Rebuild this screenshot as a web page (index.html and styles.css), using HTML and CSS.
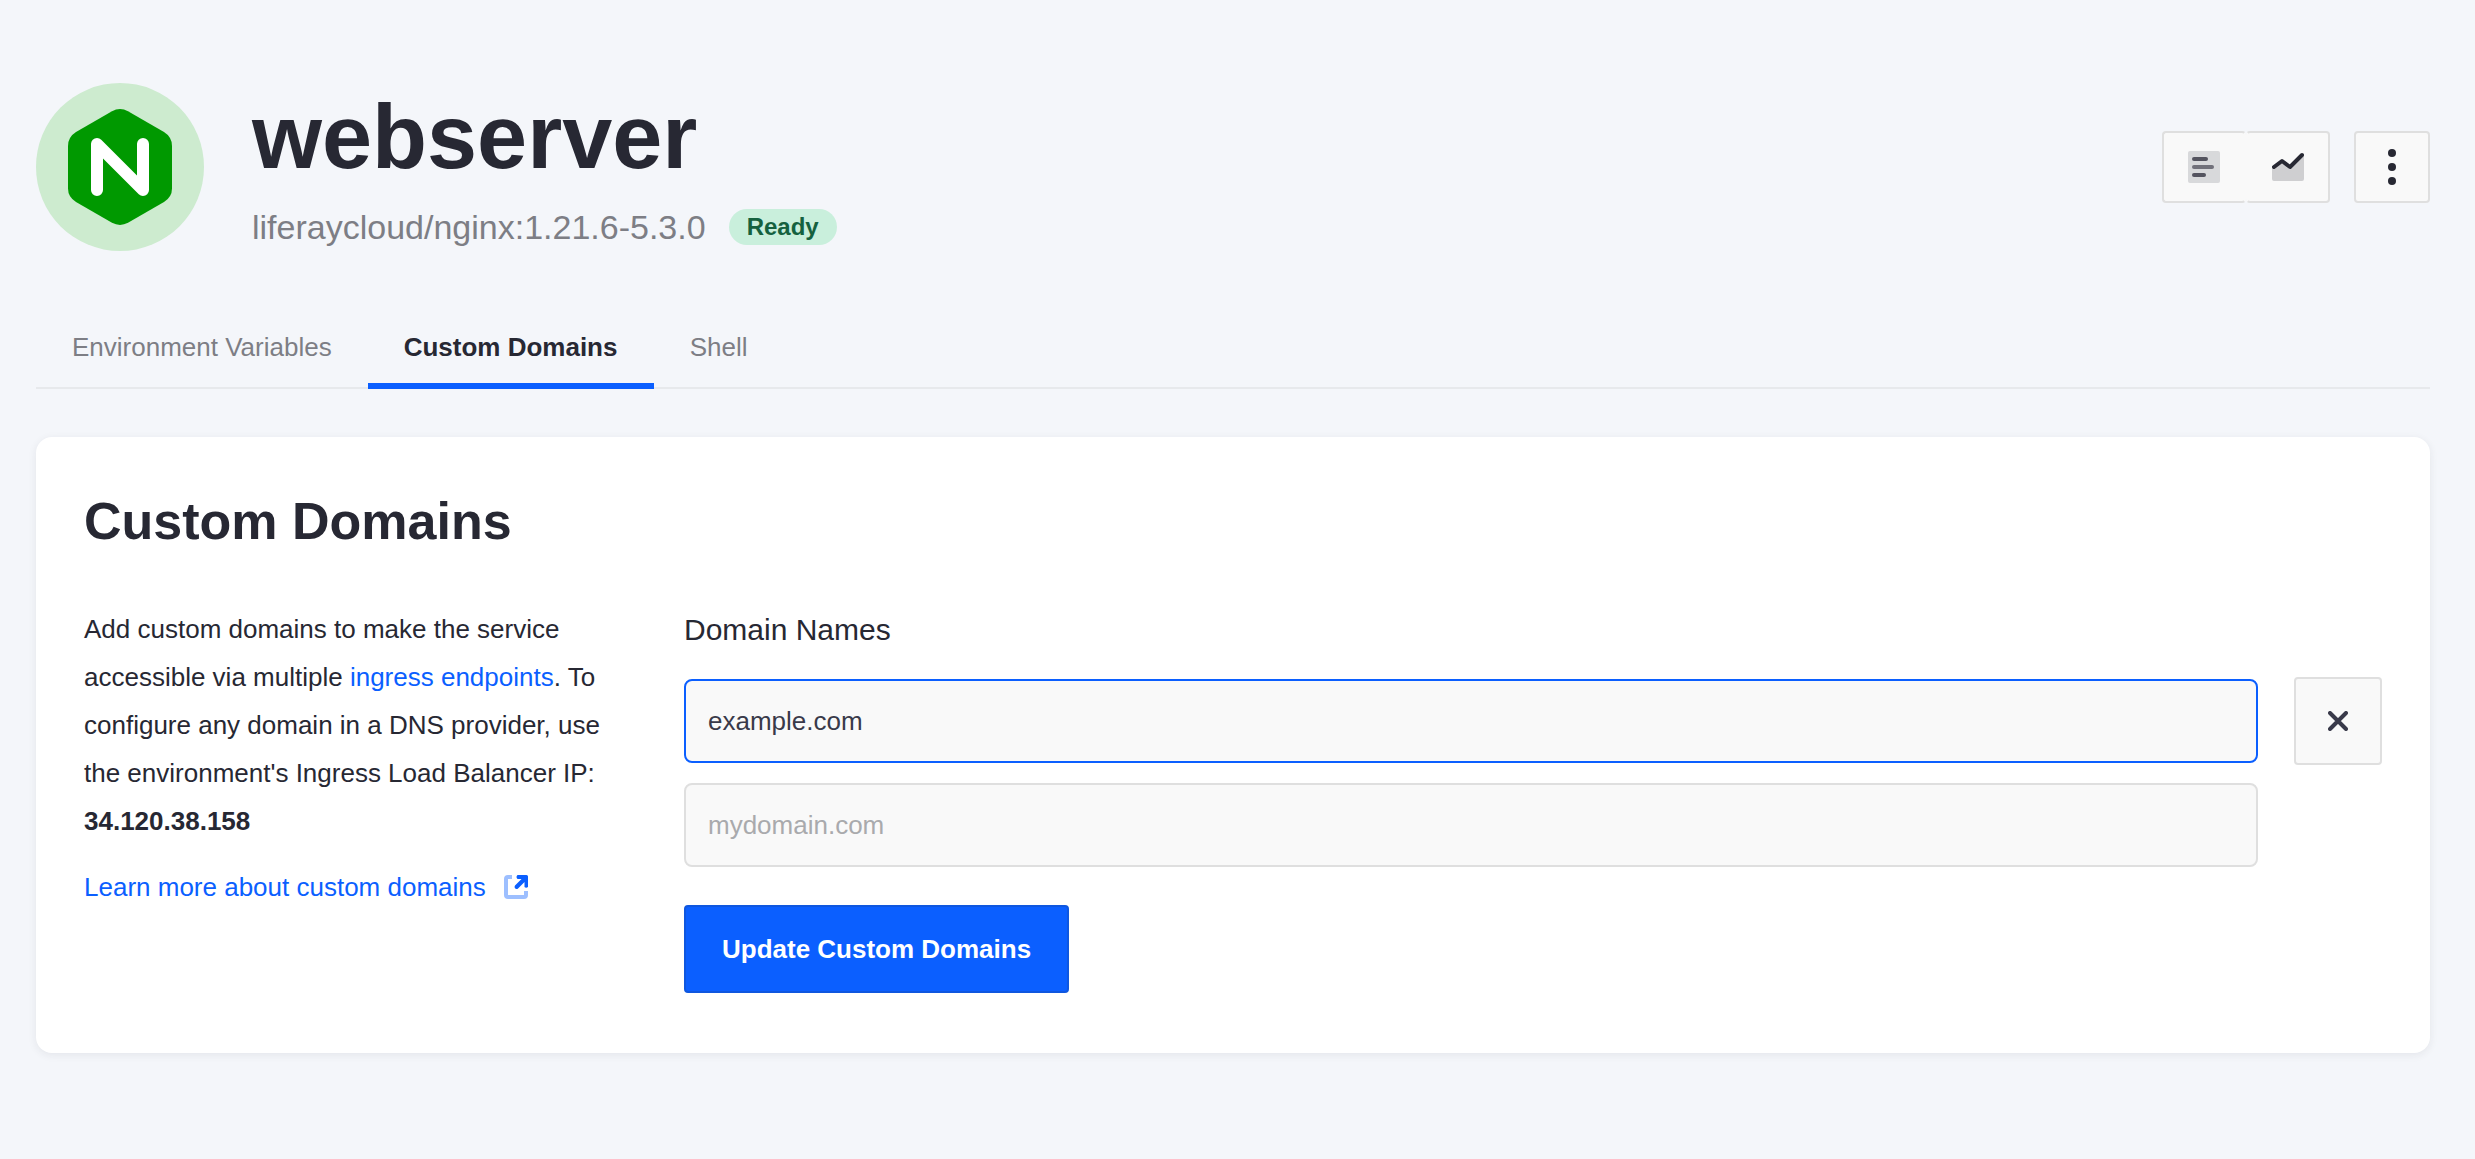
FILE: index.html
```html
<!DOCTYPE html>
<html lang="en">
<head>
<meta charset="utf-8">
<title>webserver</title>
<link rel="stylesheet" href="styles.css">
</head>
<body>
<main class="page">
  <header class="service">
    <svg class="service-logo" viewBox="0 0 168 168" aria-hidden="true">
      <circle cx="84" cy="84" r="84" fill="#cdebcf"/>
      <path d="M76 28.200Q84 24 92 28.200L128 49Q136 54 136 63V105.500Q136 114 128 119L92 139.800Q84 144 76 139.800L40 119Q32 114 32 105.500V63Q32 54 40 49Z" fill="#009900"/>
      <path d="M61 107V61L107 107V61" fill="none" stroke="#fff" stroke-width="12" stroke-linecap="round" stroke-linejoin="round"/>
    </svg>
    <div class="service-info">
      <h1 class="service-name">webserver</h1>
      <div class="service-meta">
        <span class="service-image">liferaycloud/nginx:1.21.6-5.3.0</span>
        <span class="badge">Ready</span>
      </div>
    </div>
    <div class="toolbar">
      <div class="button-group">
        <button class="tool" aria-label="Logs">
          <svg width="32" height="32" viewBox="0 0 32 32"><rect width="32" height="32" rx="2" fill="#d8d9db"/><g stroke-width="4" stroke-linecap="round"><path d="M6 8H18" stroke="#54545f"/><path d="M6 16H24" stroke="#71717a"/><path d="M6 24H16" stroke="#54545f"/></g></svg>
        </button>
        <button class="tool" aria-label="Metrics">
          <svg width="32" height="32" viewBox="0 0 32 32"><path d="M0 16L10 9L18 16L32 4V28Q32 30 30 30H2Q0 30 0 28Z" fill="#cfcfd1"/><path d="M2 16L10 10L18 16L30 4" fill="none" stroke="#272833" stroke-width="4" stroke-linecap="round" stroke-linejoin="round"/></svg>
        </button>
      </div>
      <button class="tool tool-menu" aria-label="More">
        <svg width="32" height="36" viewBox="0 0 32 36" fill="#272833"><circle cx="16" cy="4" r="4"/><circle cx="16" cy="18" r="4"/><circle cx="16" cy="32" r="4"/></svg>
      </button>
    </div>
  </header>

  <nav class="tabs">
    <a class="tab">Environment Variables</a>
    <a class="tab tab-active">Custom Domains</a>
    <a class="tab">Shell</a>
  </nav>

  <section class="card">
    <h2 class="card-title">Custom Domains</h2>
    <div class="card-body">
      <div class="help">
        <p class="help-text">Add custom domains to make the service accessible via multiple <a class="link">ingress endpoints</a>. To configure any domain in a DNS provider, use the environment's Ingress Load Balancer IP: <strong>34.120.38.158</strong></p>
        <a class="link learn-more">Learn more about custom domains
          <svg width="24" height="24" viewBox="0 0 24 24"><path d="M8 2H4Q2 2 2 4V20Q2 22 4 22H20Q22 22 22 20V16" fill="none" stroke="#9dbfff" stroke-width="4"/><path d="M13.500 0H22.500Q24 0 24 1.500V12Q22 13.500 20.500 12V7L13.800 13.700Q12 14.500 11 13.300Q10 12 11 10.600L17.500 4H13.500Q11.500 2 13.500 0Z" fill="#0b5fff"/></svg>
        </a>
      </div>
      <form class="form">
        <label class="label" for="domain">Domain Names</label>
        <div class="row">
          <input class="input input-focus" id="domain" type="text" value="example.com">
          <button class="remove" type="button" aria-label="Remove">
            <svg width="20" height="20" viewBox="0 0 20 20"><path d="M2 2L18 18M18 2L2 18" stroke="#393a4a" stroke-width="4" stroke-linecap="round"/></svg>
          </button>
        </div>
        <div class="row row-new">
          <input class="input" type="text" placeholder="mydomain.com" aria-label="New domain">
        </div>
        <button class="submit" type="button">Update Custom Domains</button>
      </form>
    </div>
  </section>
</main>
</body>
</html>
```

FILE: styles.css
```css
* {
  box-sizing: border-box;
}

body {
  margin: 0;
  background: #f4f6fa;
  color: #272833;
  font: 26px/48px "Liberation Sans", Arial, sans-serif;
}

button,
input {
  font: inherit;
  margin: 0;
}

.page {
  padding: 83px 45px 106px 36px;
}

.service {
  display: flex;
  align-items: center;
  height: 168px;
}

.service-logo {
  width: 168px;
  height: 168px;
}

.service-info {
  flex: 1;
  margin-left: 48px;
}

.service-name {
  margin: 0 0 12px;
  font-size: 90px;
  line-height: 108px;
}

.service-meta {
  display: flex;
  align-items: center;
  gap: 23px;
}

.service-image {
  color: #7d7e85;
  font-size: 34px;
}

.badge {
  height: 36px;
  padding: 0 18px;
  border-radius: 18px;
  background: #c9efdc;
  color: #15613f;
  font-size: 24px;
  font-weight: 700;
  line-height: 36px;
}

.toolbar,
.button-group {
  display: flex;
}

.toolbar {
  gap: 24px;
}

.tool,
.remove {
  display: flex;
  align-items: center;
  justify-content: center;
  padding: 0;
  border: 2px solid #dfdfdf;
  border-radius: 4px;
  background: #f9f9f9;
}

.tool {
  width: 84px;
  height: 72px;
}

.button-group .tool:first-child {
  border-right-color: transparent;
}

.button-group .tool:last-child {
  border-left-color: transparent;
}

.tool-menu {
  width: 76px;
}

.tabs {
  display: flex;
  height: 74px;
  margin-top: 64px;
  border-bottom: 2px solid #e7e9ec;
}

.tab {
  height: 74px;
  padding: 8px 36px 0;
  color: #7d7e85;
}

.tab-active {
  width: 286px;
  border-bottom: 6px solid #0b5fff;
  color: #272833;
  font-weight: 700;
}

.card {
  height: 616px;
  margin-top: 48px;
  padding: 48px;
  border-radius: 16px;
  background: #fff;
  box-shadow: 0 2px 8px rgba(39, 40, 51, 0.08);
}

.card-title {
  margin: 0;
  font-size: 52px;
  line-height: 72px;
}

.card-body {
  display: flex;
  margin-top: 48px;
}

.help {
  width: 600px;
  padding-right: 72px;
}

.help-text {
  margin: 0 0 18px;
}

.link {
  color: #0b5fff;
}

.learn-more {
  display: flex;
  align-items: center;
  gap: 18px;
}

.form {
  flex: 1;
}

.label {
  display: block;
  font-size: 30px;
  line-height: 50px;
}

.row {
  display: flex;
  align-items: center;
  gap: 36px;
  margin-top: 22px;
}

.row-new {
  margin: 18px 124px 38px 0;
}

.input {
  flex: 1;
  height: 84px;
  padding: 0 22px;
  border: 2px solid #dfdfdf;
  border-radius: 8px;
  background: #f9f9f9;
  color: #393a4a;
}

.input::placeholder {
  color: #a9aaad;
  opacity: 1;
}

.input-focus {
  border-color: #0b5fff;
}

.remove {
  width: 88px;
  height: 88px;
}

.submit {
  display: block;
  height: 88px;
  padding: 0 36px;
  border: 2px solid #0f57df;
  border-radius: 4px;
  background: #0b5fff;
  color: #fff;
  font-weight: 700;
}
```
